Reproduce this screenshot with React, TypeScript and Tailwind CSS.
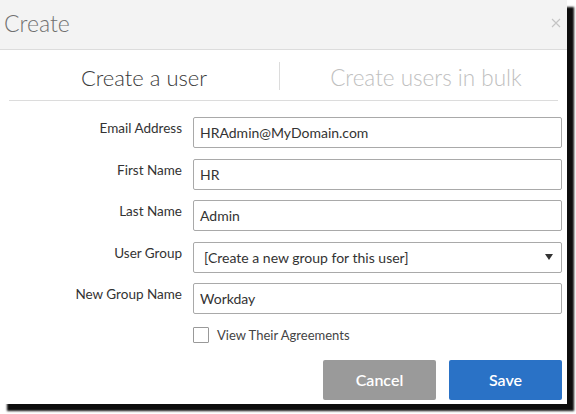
const fields = [
  { label: 'Email Address', value: 'HRAdmin@MyDomain.com' },
  { label: 'First Name', value: 'HR' },
  { label: 'Last Name', value: 'Admin' },
];

function Row({ label, children }: { label: string; children: React.ReactNode }) {
  return (
    <div className="flex items-start">
      <label className="w-[182px] shrink-0 pt-[2px] text-right text-[13.5px] leading-[18px] text-[#333]">
        {label}
      </label>
      <div className="ml-[11px] w-[369px]">{children}</div>
    </div>
  );
}

function TextInput({ value }: { value: string }) {
  return (
    <div className="flex h-[31px] items-center rounded-[2px] border border-[#a9a9a9] bg-white pl-[6px] text-[14px] text-[#333]">
      {value}
    </div>
  );
}

export default function App() {
  return (
    <div className="h-[414px] w-[576px] bg-white font-['Lato',_'Liberation_Sans',_sans-serif]">
      <div className="flex h-[404px] w-[567px] flex-col bg-white shadow-[7px_7px_2px_rgba(0,0,0,0.95)]">
        {/* header */}
        <div className="flex h-[50px] shrink-0 items-center justify-between border-b border-[#dcdcdc] bg-[#f3f3f3] pl-[4px] pr-[6px]">
          <span className="pb-[3px] text-[23px] font-light text-[#707070]">Create</span>
          <svg width="10" height="10" viewBox="0 0 10 10" className="mb-[4px]">
            <path d="M1 1L9 9M9 1L1 9" stroke="#c4c4c4" strokeWidth="1.1" />
          </svg>
        </div>

        {/* tabs */}
        <div className="mx-[9px] flex h-[51px] shrink-0 items-center border-b border-[#dcdcdc]">
          <div className="w-[270px] pt-[5px] text-center text-[22px] font-light text-[#3a3a3a]">
            Create a user
          </div>
          <div className="mt-[2px] h-[28px] w-px bg-[#dcdcdc]" />
          <div className="flex-1 pl-[14px] pt-[5px] text-center text-[22.5px] font-light text-[#c0c0c0]">
            Create users in bulk
          </div>
        </div>

        {/* form */}
        <div className="mt-[16px] flex flex-col gap-[10.5px]">
          {fields.map((f) => (
            <Row key={f.label} label={f.label}>
              <TextInput value={f.value} />
            </Row>
          ))}
          <Row label="User Group">
            <div className="flex h-[31px] items-center justify-between rounded-[2px] border border-[#a9a9a9] bg-white pl-[10px] pr-[8px] text-[14px] text-[#333]">
              <span>[Create a new group for this user]</span>
              <svg width="8" height="6" viewBox="0 0 8 6">
                <path d="M0 0H8L4 6Z" fill="#333" />
              </svg>
            </div>
          </Row>
          <Row label="New Group Name">
            <TextInput value="Workday" />
          </Row>
        </div>

        <div className="ml-[193px] mt-[13px] flex items-center gap-[8px]">
          <div className="h-[16px] w-[16px] rounded-[1px] border border-[#999] bg-white" />
          <span className="text-[13px] leading-[16px] text-[#444]">View Their Agreements</span>
        </div>

        <div className="ml-[323px] mt-[17px] flex gap-[13px]">
          <button className="h-[40px] w-[113px] rounded-[2px] bg-[#9a9a9a] text-[16px] font-semibold text-white">
            Cancel
          </button>
          <button className="h-[40px] w-[113px] rounded-[2px] bg-[#2a72c6] text-[16px] font-semibold text-white">
            Save
          </button>
        </div>
      </div>
    </div>
  );
}
